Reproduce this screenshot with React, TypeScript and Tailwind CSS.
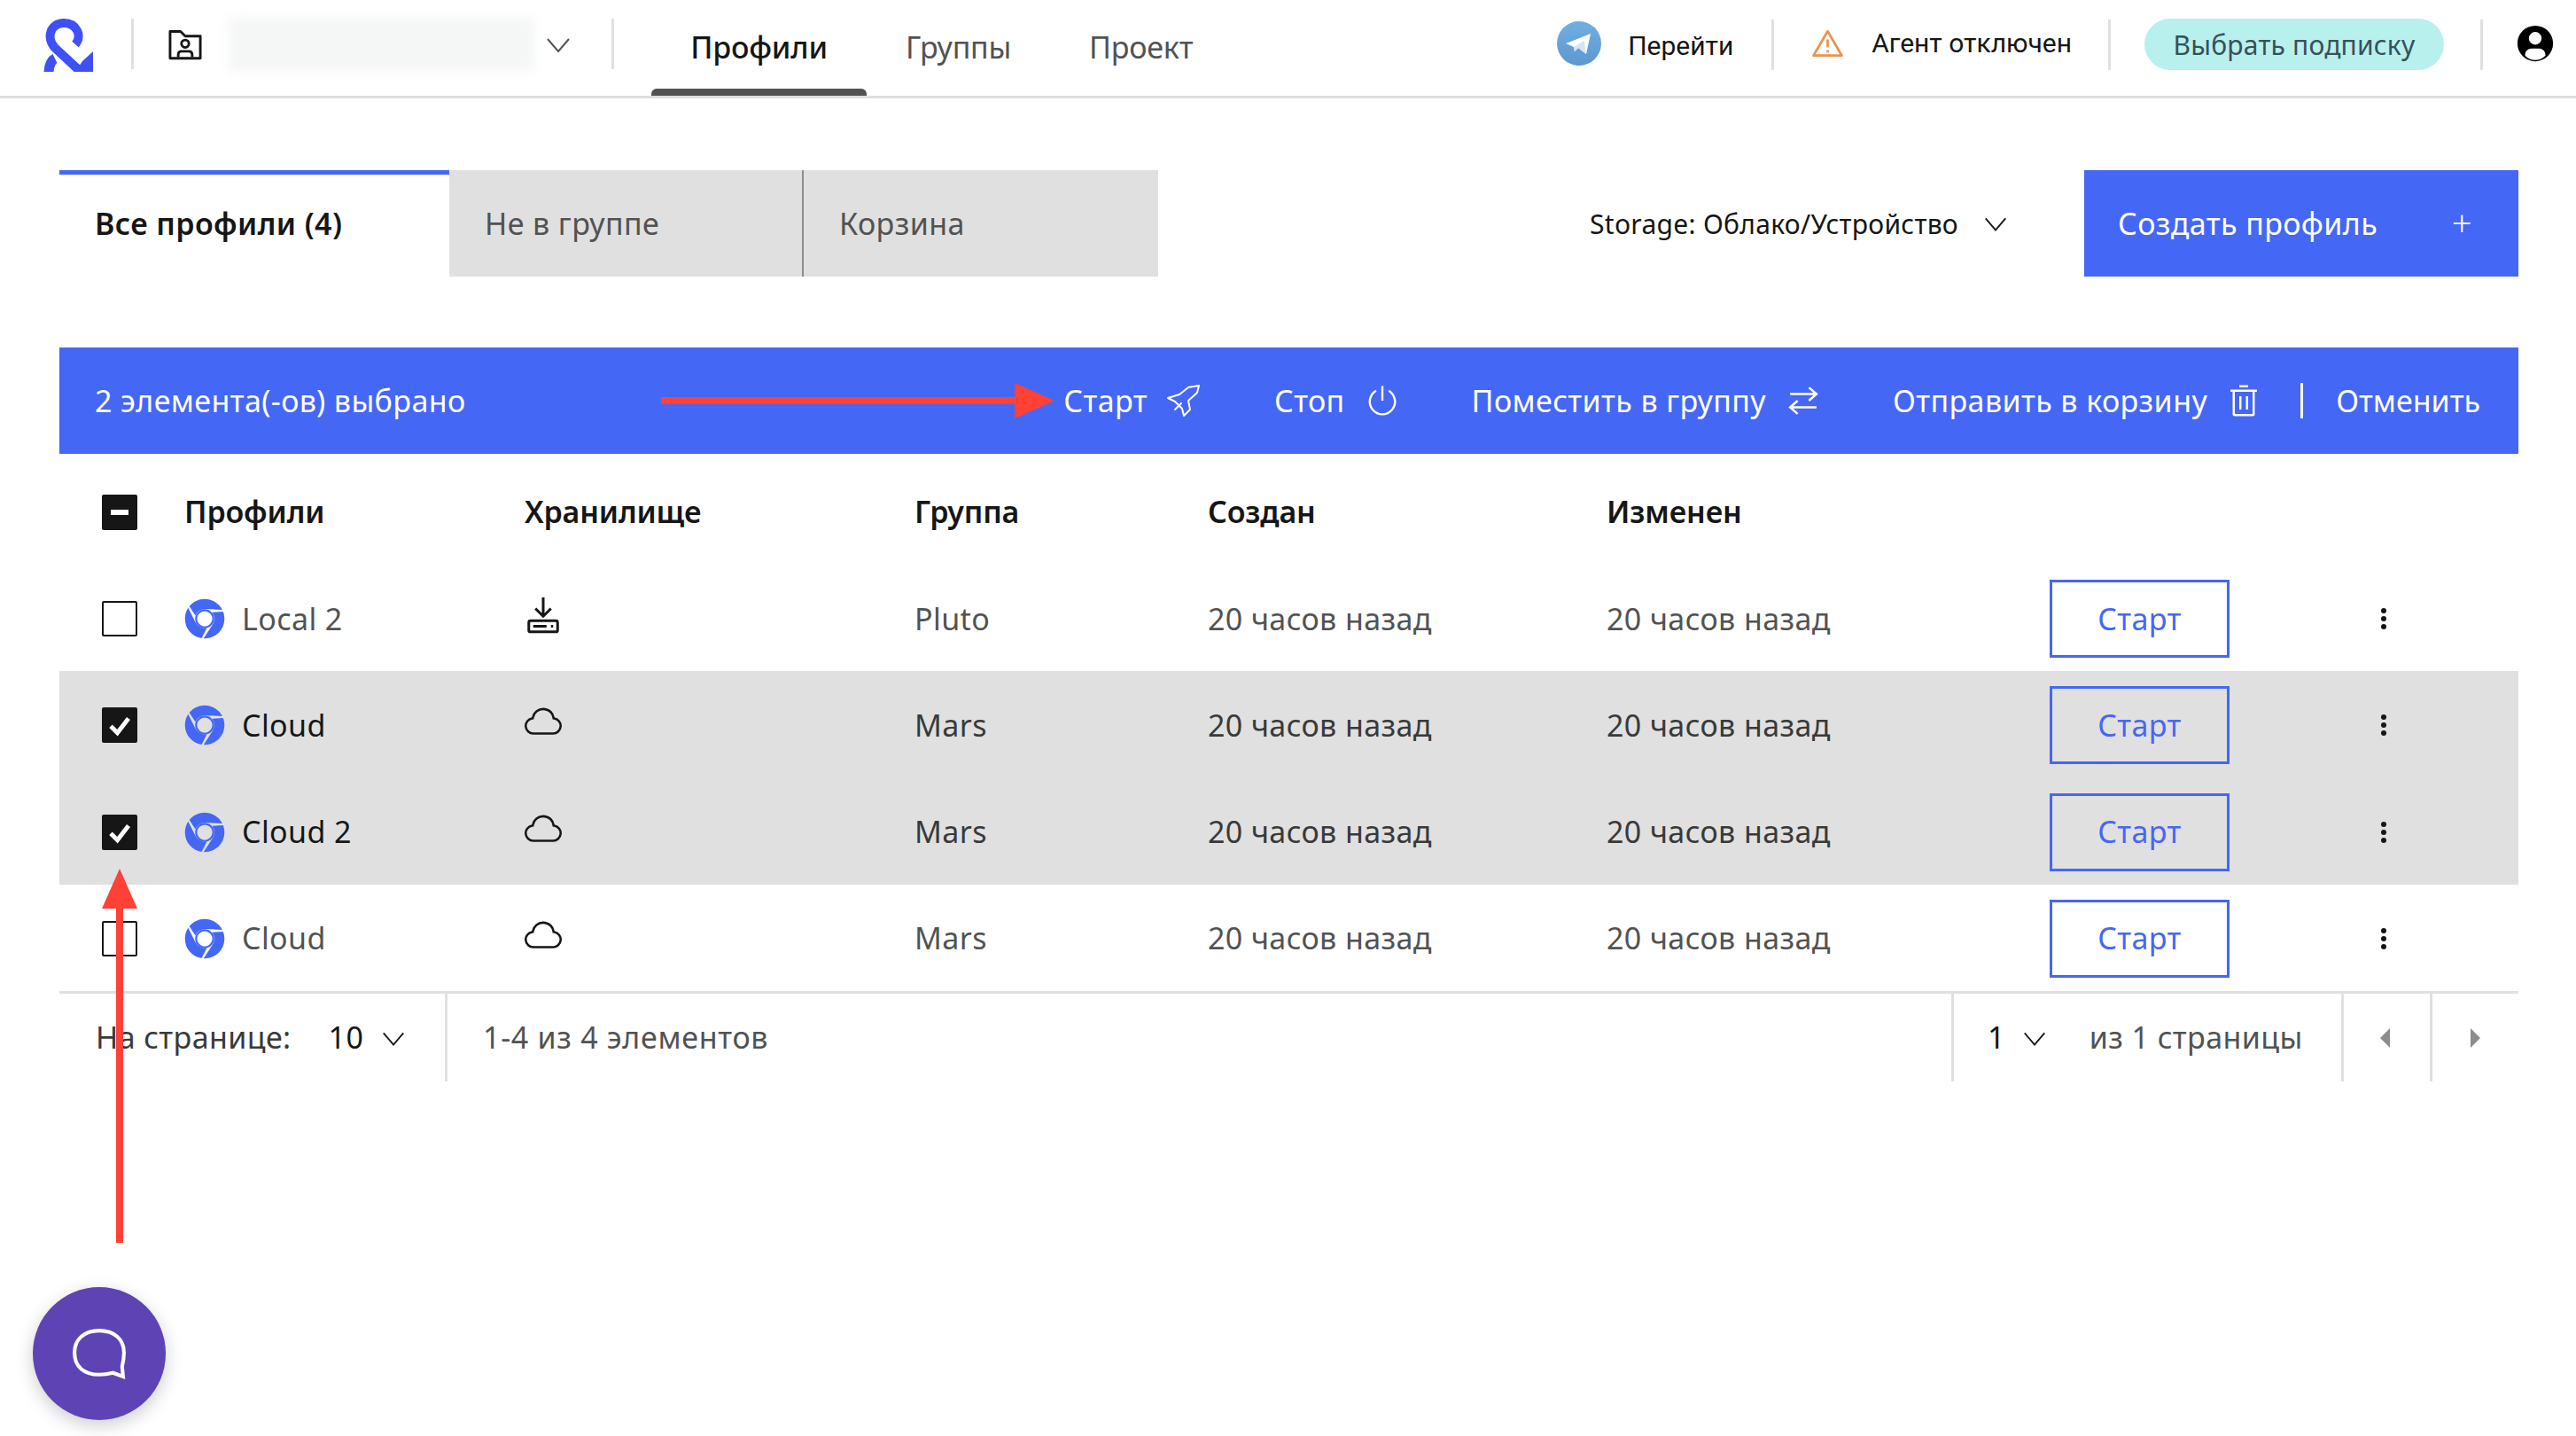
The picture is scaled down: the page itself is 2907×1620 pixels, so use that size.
import React from "react";

const BLUE = "#4567f5";

function Chevron({ className = "" }: { className?: string }) {
  return (
    <svg viewBox="0 0 32 32" className={className} fill="none" stroke="currentColor" strokeWidth="2">
      <path d="M4 10 L16 24 L28 10" />
    </svg>
  );
}

function Cloud() {
  return (
    <svg viewBox="0 0 32 32" className="w-[42px] h-[42px]" fill="#161616">
      <path d="M16,7h0a7.66,7.66,0,0,1,1.51.15,8,8,0,0,1,6.35,6.34l.26,1.35,1.35.24a5.5,5.5,0,0,1-1,10.92H7.5a5.5,5.5,0,0,1-1-10.92l1.34-.24.26-1.35A8,8,0,0,1,16,7m0-2a10,10,0,0,0-9.83,8.12A7.5,7.5,0,0,0,7.49,28h17a7.5,7.5,0,0,0,1.32-14.88,10,10,0,0,0-7.94-7.94A10.27,10.27,0,0,0,16,5Z" />
    </svg>
  );
}

function Local() {
  return (
    <svg viewBox="0 0 32 36" className="w-[40px] h-[46px]" fill="none" stroke="#161616" strokeWidth="2.4">
      <path d="M16 2 V18 M9 12 L16 19 L23 12" />
      <rect x="3" y="23" width="26" height="10" rx="1.5" />
      <path d="M7 28 H19 M23 28 H25" />
    </svg>
  );
}

function ChromeLogo() {
  return (
    <svg viewBox="0 0 496 512" className="w-[46px] h-[46px]" fill={BLUE}>
      <path d="M131.5 217.5L55.1 100.1c47.6-59.2 119-91.8 192-92.1 42.3-.3 85.5 10.5 124.8 33.2 43.4 25.2 76.4 61.4 97.4 103L264 133.4c-58.1-3.4-113.4 29.3-132.5 84.1zM479.3 166.8L339.6 174c37.9 44.3 38.5 108.2 6.6 157.2L234.1 503.6c46.5 2.5 94.4-7.7 137.8-32.9 107.4-62 150.9-192 107.4-303.9zM133.7 303.6L40.4 120.1C14.9 159.1 0 205.9 0 256c0 124 90.8 226.7 209.5 244.9l65.6-128.2c-58.2 7.6-115.9-20.2-141.4-69.1z" />
      <circle cx="248" cy="256" r="108" fill="none" stroke={BLUE} strokeWidth="24" />
    </svg>
  );
}

function Check({ state }: { state: "off" | "on" | "mixed" }) {
  if (state === "off") return <div className="w-[40px] h-[40px] border-[2px] border-[#161616] rounded-[2px]" />;
  return (
    <div className="w-[40px] h-[40px] bg-[#161616] rounded-[2px] flex items-center justify-center">
      {state === "on" ? (
        <svg viewBox="0 0 24 24" className="w-[30px] h-[30px]" fill="none" stroke="#fff" strokeWidth="4">
          <path d="M4 13 L10 19 L20 6" />
        </svg>
      ) : (
        <div className="w-[20px] h-[6px] bg-white" />
      )}
    </div>
  );
}

const rows = [
  { name: "Local 2", group: "Pluto", sel: false, local: true },
  { name: "Cloud", group: "Mars", sel: true, local: false },
  { name: "Cloud 2", group: "Mars", sel: true, local: false },
  { name: "Cloud", group: "Mars", sel: false, local: false },
];

const cols = "grid grid-cols-[141px_65px_319px_440px_331px_450px_500px_1fr] items-center";

export default function App() {
  return (
    <div className="relative w-full h-[1620px] overflow-hidden bg-white text-[#161616] text-[34px] tracking-[0.4px] font-['Noto_Sans',sans-serif]">
      {/* Top bar */}
      <header className="h-[111px] border-b-[3px] border-[#e0e0e0] flex items-start">
        <div className="w-[148px] h-[78px] pt-[21px] pl-[47px] shrink-0">
          <svg viewBox="0 0 58 60" className="w-[58px] h-[60px]" fill="none">
            <path d="M8 62 C8 53 11 47 15 45" stroke="#3f51f5" strokeWidth="11" />
            <path d="M58 37 V60 H38 L46 48 Z" fill="#3f51f5" />
            <path d="M44 60 L16 34 C4 22 10 5 25 5 C40 5 46 20 38 29" stroke="#3f51f5" strokeWidth="10" />
          </svg>
        </div>
        <div className="mt-[21px] h-[57px] border-l-[3px] border-[#e0e0e0] flex items-center">
          <svg viewBox="0 0 32 32" className="w-[42px] h-[42px] ml-[37px]" fill="none" stroke="#161616" strokeWidth="2.2" strokeLinejoin="round">
            <path d="M3 5 H12 L16 9 H29 V28 H3 Z" />
            <circle cx="16" cy="15.5" r="3.2" />
            <path d="M10 27 V25 Q10 22 13 22 H19 Q22 22 22 25 V27" />
          </svg>
          <div className="ml-[28px] w-[345px] h-[60px] bg-[#f5f6f6] blur-[6px]" />
          <Chevron className="w-[32px] h-[32px] ml-[11px] text-[#525252]" />
        </div>
        <div className="ml-[44px] mt-[21px] h-[57px] border-l-[3px] border-[#e0e0e0]" />
        <nav className="ml-[42px] h-[108px] flex items-stretch text-[#525252] tracking-[-0.2px]">
          <div className="w-[243px] flex flex-col font-medium text-[#161616]">
            <div className="flex-1 flex items-center justify-center pt-[6px]">Профили</div>
            <div className="h-[8px] bg-[#525252] rounded-t-[6px]" />
          </div>
          <div className="ml-[44px] flex items-center pb-[2px]">Группы</div>
          <div className="ml-[88px] flex items-center pb-[2px]">Проект</div>
        </nav>
        <div className="ml-auto h-[108px] flex items-center pr-[23px] font-['Roboto',sans-serif] tracking-normal">
          <div className="w-[50px] h-[50px] -mt-[10px] rounded-full bg-gradient-to-b from-[#72aee0] to-[#5a98d0] flex items-center justify-center">
            <svg viewBox="0 0 50 50" className="w-[50px] h-[50px]">
              <path d="M10 25 L38 14 L33 37 L24 30 L20 34 L19 29 Z" fill="#fff" />
              <path d="M19 29 L20 34 L24 30 L33 37 L31 22 Z" fill="#d5e5f3" />
            </svg>
          </div>
          <span className="ml-[30px] text-[30px] -mt-[6px]">Перейти</span>
          <div className="ml-[43px] h-[57px] -mt-[8px] border-l-[3px] border-[#e0e0e0]" />
          <svg viewBox="0 0 32 28" className="ml-[42px] w-[37px] h-[32px] -mt-[10px]" fill="none" stroke="#e8954f" strokeWidth="2.4" strokeLinejoin="round">
            <path d="M16 2 L30 26 H2 Z" />
            <path d="M16 10 V18 M16 20.5 V23" />
          </svg>
          <span className="ml-[31px] text-[30px] -mt-[12px]">Агент отключен</span>
          <div className="ml-[41px] h-[57px] -mt-[8px] border-l-[3px] border-[#e0e0e0]" />
          <div className="ml-[38px] w-[338px] h-[58px] -mt-[8px] rounded-full bg-[#b8f0ee] flex items-center justify-center text-[30px] text-[#37505a] font-['Noto_Sans',sans-serif] tracking-[0.2px]">Выбрать подписку</div>
          <div className="ml-[41px] h-[57px] -mt-[8px] border-l-[3px] border-[#e0e0e0]" />
          <svg viewBox="0 0 32 32" className="ml-[36px] w-[46px] h-[46px] -mt-[10px]" fill="#000">
            <path d="M16 2a14 14 0 1 0 14 14A14 14 0 0 0 16 2Zm0 5a5 5 0 1 1-5 5 5 5 0 0 1 5-5Zm8 18.6a11 11 0 0 1-16 0V25a5 5 0 0 1 5-5h6a5 5 0 0 1 5 5Z" />
          </svg>
        </div>
      </header>

      <main className="pl-[67px] pr-[65px] pt-[81px]">
        {/* Tabs */}
        <div className="flex h-[120px]">
          <div className="w-[440px] border-t-[5px] border-[#4567f5] pl-[40px] pb-[4px] flex items-center font-semibold">Все профили (4)</div>
          <div className="w-[398px] bg-[#e0e0e0] pl-[40px] flex items-center text-[#525252]">Не в группе</div>
          <div className="w-[402px] bg-[#e0e0e0] border-l-[2px] border-[#8d8d8d] pl-[40px] flex items-center text-[#525252]">Корзина</div>
          <div className="ml-auto flex items-center text-[30px] tracking-[0.3px] mr-[85px]">
            Storage: Облако/Устройство
            <Chevron className="w-[30px] h-[30px] ml-[27px]" />
          </div>
          <div className="w-[490px] bg-[#4567f5] text-white flex items-center pl-[38px] pr-[52px] justify-between">
            <span>Создать профиль</span>
            <span className="text-[40px] font-light">+</span>
          </div>
        </div>

        {/* Action bar */}
        <div className="mt-[80px] h-[120px] bg-[#4567f5] text-white flex items-center pl-[40px] pr-[43px]">
          <span>2 элемента(-ов) выбрано</span>
          <div className="ml-auto flex items-center">
            <span>Старт</span>
            <svg viewBox="0 0 37 36" className="ml-[22px] w-[37px] h-[36px]" fill="none" stroke="#fff" strokeWidth="2" strokeLinejoin="round" strokeLinecap="round">
              <path d="M36 1 L24 3 L14 11 L1 15 L9 19 L17 27 L19 35 L26 28 L24 18 L34 9 Z" />
              <path d="M9 28 L16 21" />
            </svg>
            <span className="ml-[84px]">Стоп</span>
            <svg viewBox="0 0 32 32" className="ml-[23px] w-[38px] h-[38px]" fill="#fff">
              <path d="M22.5,5.74l-1,1.73a11,11,0,1,1-11,0l-1-1.73a13,13,0,1,0,13,0Z" />
              <path d="M15 2H17V16H15z" />
            </svg>
            <span className="ml-[82px]">Поместить в группу</span>
            <svg viewBox="0 0 32 32" className="ml-[25px] w-[34px] h-[34px]" fill="none" stroke="#fff" strokeWidth="2.4">
              <path d="M2 9 H30 M22 2 L30 9 L22 16 M30 23 H2 M10 16 L2 23 L10 30" />
            </svg>
            <span className="ml-[84px]">Отправить в корзину</span>
            <svg viewBox="0 0 32 32" className="ml-[21px] w-[40px] h-[40px]" fill="#fff">
              <path d="M12 12H14V24H12zM18 12H20V24H18z" />
              <path d="M4 6V8H6V28a2 2 0 002 2H24a2 2 0 002-2V8h2V6zM8 28V8H24V28zM12 2H20V4H12z" />
            </svg>
            <div className="ml-[44px] h-[40px] border-l-[3px] border-white" />
            <span className="ml-[37px] tracking-normal">Отменить</span>
          </div>
        </div>

        {/* Table */}
        <div className={`${cols} h-[125px] pt-[6px] font-semibold tracking-[-0.15px]`}>
          <div className="pl-[48px]"><Check state="mixed" /></div>
          <div className="col-span-2">Профили</div>
          <div>Хранилище</div>
          <div>Группа</div>
          <div>Создан</div>
          <div>Изменен</div>
        </div>
        {rows.map((r, i) => (
          <div key={i} className={`${cols} h-[120.25px] pt-[2px] ${r.sel ? "bg-[#e0e0e0] text-[#393939]" : "text-[#525252]"}`}>
            <div className="pl-[48px]"><Check state={r.sel ? "on" : "off"} /></div>
            <div className="flex items-center"><ChromeLogo /></div>
            <div className={r.sel ? "text-[#161616]" : ""}>{r.name}</div>
            <div className={r.local ? "pl-[1px] -mt-[8px]" : "-mt-[10px]"}>{r.local ? <Local /> : <Cloud />}</div>
            <div>{r.group}</div>
            <div>20 часов назад</div>
            <div>20 часов назад</div>
            <div className="flex items-center">
              <button className="shrink-0 w-[203px] h-[88px] border-[3px] border-[#4567f5] text-[#4567f5] flex items-center justify-center">Старт</button>
              <div className="ml-[171px] flex flex-col gap-[3px]">
                <span className="w-[6px] h-[6px] rounded-full bg-[#161616]" />
                <span className="w-[6px] h-[6px] rounded-full bg-[#161616]" />
                <span className="w-[6px] h-[6px] rounded-full bg-[#161616]" />
              </div>
            </div>
          </div>
        ))}

        {/* Footer */}
        <div className="h-[102px] border-t-[3px] border-[#e0e0e0] flex items-stretch text-[#525252]">
          <div className="w-[438px] border-r-[3px] border-[#e0e0e0] pl-[41px] flex items-center text-[#393939]">
            <span>На странице:</span>
            <span className="ml-[42px] text-[#161616]">10</span>
            <Chevron className="ml-[19px] w-[30px] h-[30px] text-[#161616]" />
          </div>
          <div className="pl-[40px] flex items-center tracking-[0.7px]">1-4 из 4 элементов</div>
          <div className="ml-auto w-[440px] border-l-[3px] border-[#e0e0e0] pl-[38px] flex items-center">
            <span className="text-[#161616]">1</span>
            <Chevron className="ml-[18px] w-[30px] h-[30px] text-[#161616]" />
            <span className="ml-[47px]">из 1 страницы</span>
          </div>
          <div className="w-[100px] border-l-[3px] border-[#e0e0e0] pr-[4px] flex items-center justify-center">
            <svg viewBox="0 0 12 24" className="w-[13px] h-[22px]" fill="#8d8d8d"><path d="M12 0 L0 12 L12 24 Z" /></svg>
          </div>
          <div className="w-[100px] border-l-[3px] border-[#e0e0e0] flex items-center justify-center">
            <svg viewBox="0 0 12 24" className="w-[13px] h-[22px]" fill="#8d8d8d"><path d="M0 0 L12 12 L0 24 Z" /></svg>
          </div>
        </div>
      </main>

      {/* Annotation arrows */}
      <svg className="absolute left-[740px] top-[425px] w-[455px] h-[55px]" viewBox="0 0 455 55" fill="#ff4136">
        <path d="M6 23 H405 V7 L450 27 L405 47 V31 H6 Z" />
      </svg>
      <svg className="absolute left-[110px] top-[975px] w-[50px] h-[432px]" viewBox="0 0 50 432" fill="#ff4136">
        <path d="M25 5 L45 50 H29 V427 H21 V50 H5 Z" />
      </svg>

      {/* Chat bubble */}
      <div className="absolute left-[37px] top-[1452px] w-[150px] h-[150px] rounded-full bg-[#5e43b5] shadow-[0_6px_20px_rgba(0,0,0,0.2)] flex items-center justify-center">
        <svg viewBox="0 0 60 56" className="w-[62px] h-[58px]" fill="none" stroke="#fff" strokeWidth="4">
          <path d="M30 3 C46 3 57 12 57 27 C57 33 56 38 55 42 L56 53 L45 49 C41 50 36 51 30 51 C13 51 3 42 3 27 C3 12 14 3 30 3 Z" />
        </svg>
      </div>
    </div>
  );
}
